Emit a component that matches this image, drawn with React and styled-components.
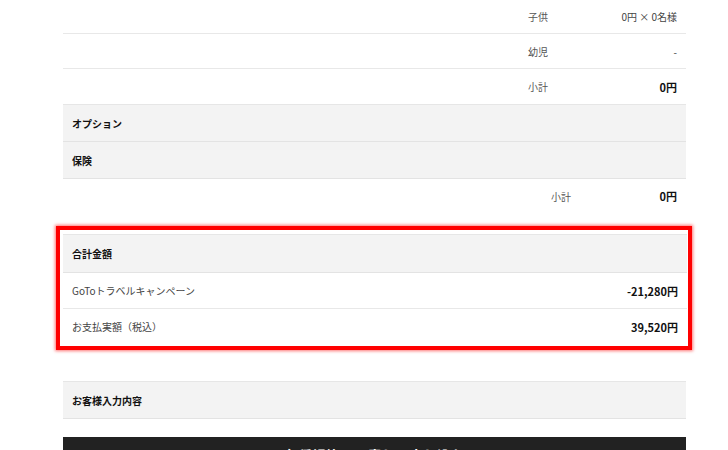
import React from "react";
import styled, { createGlobalStyle } from "styled-components";

const GlobalStyle = createGlobalStyle`
  html, body {
    margin: 0;
    padding: 0;
    background: #fff;
  }
  body {
    font-family: "Noto Sans CJK JP", "Noto Sans", "Liberation Sans", sans-serif;
    font-size: 10px;
    color: #333;
  }
`;

const Page = styled.div`
  width: 623px;
  padding-left: 63px;
`;

const DetailRow = styled.div`
  display: grid;
  grid-template-columns: ${({ $offset }) => $offset || 465}px 1fr;
  align-items: center;
  height: ${({ $h }) => $h || 34}px;
  border-bottom: ${({ $noLine }) => ($noLine ? "none" : "1px solid #e8e8e8")};
`;

const Cell = styled.div`
  display: flex;
  justify-content: space-between;
  align-items: center;
  padding-right: 9px;
`;

const Label = styled.span`
  color: #555;
`;

const Value = styled.span`
  color: ${({ $bold }) => ($bold ? "#111" : "#444")};
  font-weight: ${({ $bold }) => ($bold ? 700 : 400)};
  font-size: ${({ $bold }) => ($bold ? 11 : 10)}px;
`;

const GrayRow = styled.div`
  display: flex;
  align-items: center;
  height: ${({ $h }) => $h || 36}px;
  padding-left: 9px;
  background: #f3f3f3;
  border-top: ${({ $top }) => ($top ? "1px solid #e6e6e6" : "none")};
  border-bottom: 1px solid #e3e3e3;
  font-weight: 700;
  color: #111;
`;

const Highlight = styled.div`
  margin: 13px -6px 0 -7px;
  border: 4px solid #ff0000;
  box-shadow: 0 0 3px 1px rgba(255, 0, 0, 0.55);
  padding: 4px 1px 2px 3px;
  background: #fff;
`;

const TotalRow = styled.div`
  display: flex;
  justify-content: space-between;
  align-items: center;
  height: 35px;
  padding: 0 9px;
  border-bottom: ${({ $noLine }) => ($noLine ? "none" : "1px solid #e8e8e8")};
`;

const TotalLabel = styled.span`
  color: #444;
`;

const TotalValue = styled.span`
  font-weight: 700;
  font-size: 11px;
  color: #111;
`;

const CustomerBox = styled(GrayRow)`
  margin-top: 31px;
`;

const SubmitBar = styled.div`
  margin-top: 18px;
  height: 50px;
  background: #222;
  color: #fff;
  font-weight: 700;
  font-size: 14px;
  display: flex;
  justify-content: center;
  padding-top: 8px;
  box-sizing: border-box;
`;

export default function App() {
  return (
    <>
      <GlobalStyle />
      <Page>
        <DetailRow $h={33}>
          <div />
          <Cell>
            <Label>子供</Label>
            <Value>0円 × 0名様</Value>
          </Cell>
        </DetailRow>
        <DetailRow>
          <div />
          <Cell>
            <Label>幼児</Label>
            <Value>-</Value>
          </Cell>
        </DetailRow>
        <DetailRow $h={35} $noLine>
          <div />
          <Cell>
            <Label>小計</Label>
            <Value $bold>0円</Value>
          </Cell>
        </DetailRow>

        <GrayRow $top>オプション</GrayRow>
        <GrayRow>保険</GrayRow>

        <DetailRow $offset={488} $noLine>
          <div />
          <Cell>
            <Label>小計</Label>
            <Value $bold>0円</Value>
          </Cell>
        </DetailRow>

        <Highlight>
          <GrayRow $top $h={37}>合計金額</GrayRow>
          <TotalRow>
            <TotalLabel>GoToトラベルキャンペーン</TotalLabel>
            <TotalValue>-21,280円</TotalValue>
          </TotalRow>
          <TotalRow $noLine>
            <TotalLabel>お支払実額（税込）</TotalLabel>
            <TotalValue>39,520円</TotalValue>
          </TotalRow>
        </Highlight>

        <CustomerBox $top>お客様入力内容</CustomerBox>

        <SubmitBar>各種規約に同意して申し込む</SubmitBar>
      </Page>
    </>
  );
}
